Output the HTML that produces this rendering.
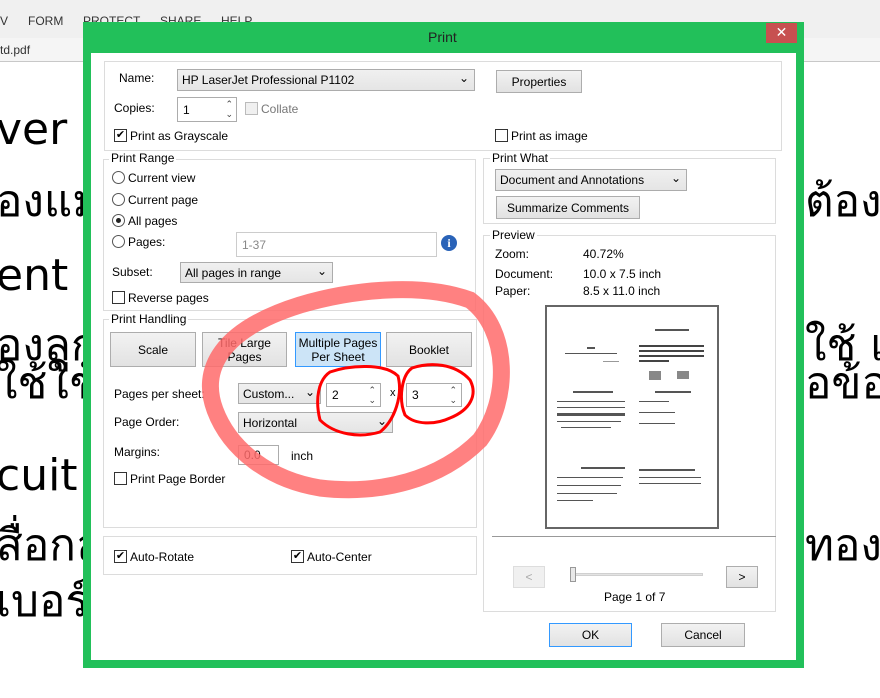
<!DOCTYPE html>
<html style="overflow:hidden"><head><meta charset="utf-8"><style>
*{margin:0;padding:0;box-sizing:border-box}
html,body{width:880px;height:698px;overflow:hidden}
body{background:#fff;font-family:"Liberation Sans","DejaVu Sans",sans-serif;font-size:12px;color:#000;position:relative}
.a{position:absolute;white-space:nowrap}
.big{position:absolute;font-size:44px;white-space:nowrap;font-family:"DejaVu Sans","Liberation Sans",sans-serif;color:#000}
.grp{position:absolute;border:1px solid #dcdcdc}
.gt{position:absolute;background:#fff;padding:0 2px;font-size:12px}
.btn{position:absolute;border:1px solid #adadad;background:linear-gradient(#f2f2f2,#e2e2e2);text-align:center;font-size:12px;display:flex;align-items:center;justify-content:center;line-height:14px}
.cb{position:absolute;width:13px;height:13px;border:1px solid #333;background:#fff;font-size:11px;line-height:11px;text-align:center}
.rd{position:absolute;width:13px;height:13px;border:1px solid #555;border-radius:50%;background:#fff}
.combo{position:absolute;border:1px solid #acacac;background:linear-gradient(#f0f0f0,#e5e5e5);padding-left:4px;font-size:12px;display:flex;align-items:center}
.combo:after{content:"⌄";position:absolute;right:5px;top:1px;font-size:12px}
.inp{position:absolute;border:1px solid #acacac;background:#fff;padding-left:5px;font-size:12px;display:flex;align-items:center}
.bar{position:absolute;height:2px;background:#555}
</style></head><body>
<div class="a" style="left:0;top:0;width:880px;height:38px;background:#f0f0f0"></div>
<div class="a" style="left:0;top:14px;font-size:12px;color:#333">V</div>
<div class="a" style="left:28px;top:14px;font-size:12px;color:#333">FORM</div>
<div class="a" style="left:83px;top:14px;font-size:12px;color:#333">PROTECT</div>
<div class="a" style="left:160px;top:14px;font-size:12px;color:#333">SHARE</div>
<div class="a" style="left:221px;top:14px;font-size:12px;color:#333">HELP</div>
<div class="a" style="left:0;top:38px;width:880px;height:24px;background:#f5f5f5;border-bottom:1px solid #c8c8c8"></div>
<div class="a" style="left:0;top:43px;font-size:12px;color:#333">td.pdf</div>
<div class="big" style="left:-4px;top:104px">ver</div>
<div class="big" style="left:-4px;top:166px">ื่องแม</div>
<div class="big" style="left:-4px;top:250px">ent</div>
<div class="big" style="left:-4px;top:310px">ื่องลูก</div>
<div class="big" style="left:-4px;top:348px">ใช้ใช้แ</div>
<div class="big" style="left:-4px;top:450px">cuit</div>
<div class="big" style="left:-4px;top:510px">สื่อกล</div>
<div class="big" style="left:-4px;top:566px">เบอร์อ</div>
<div class="big" style="left:805px;top:166px">ต้องก</div>
<div class="big" style="left:805px;top:310px">ใช้ เป</div>
<div class="big" style="left:805px;top:348px">อข้อมู</div>
<div class="big" style="left:805px;top:510px">ทองแด</div>

<div class="a" style="left:83px;top:22px;width:721px;height:646px;background:#22c05a"></div>
<div class="a" style="left:91px;top:53px;width:705px;height:607px;background:#fff"></div>
<div class="a" style="left:428px;top:29px;font-size:14px;color:#222">Print</div>
<div class="a" style="left:766px;top:23px;width:31px;height:20px;background:#c75050;color:#fff;text-align:center;font-size:14px;line-height:19px">✕</div>

<div class="grp" style="left:104px;top:61px;width:678px;height:90px"></div>
<div class="a" style="left:119px;top:71px">Name:</div>
<div class="combo" style="left:177px;top:69px;width:298px;height:22px">HP LaserJet Professional P1102</div>
<div class="btn" style="left:496px;top:70px;width:86px;height:23px">Properties</div>
<div class="a" style="left:114px;top:101px">Copies:</div>
<div class="inp" style="left:177px;top:97px;width:60px;height:25px">1<span style="position:absolute;right:3px;top:1px;font-size:9px;line-height:10px;color:#444">⌃<br>⌄</span></div>
<div class="cb" style="left:245px;top:102px;border-color:#bbb;background:#f0f0f0"></div>
<div class="a" style="left:261px;top:102px;color:#777">Collate</div>
<div class="cb" style="left:114px;top:129px">✔</div>
<div class="a" style="left:130px;top:129px">Print as Grayscale</div>
<div class="cb" style="left:495px;top:129px"></div>
<div class="a" style="left:511px;top:129px">Print as image</div>

<div class="grp" style="left:103px;top:159px;width:373px;height:152px"></div>
<div class="gt" style="left:109px;top:151px">Print Range</div>
<div class="rd" style="left:112px;top:171px"></div><div class="a" style="left:128px;top:171px">Current view</div>
<div class="rd" style="left:112px;top:193px"></div><div class="a" style="left:128px;top:193px">Current page</div>
<div class="rd" style="left:112px;top:214px"><div style="position:absolute;left:3px;top:3px;width:5px;height:5px;border-radius:50%;background:#222"></div></div><div class="a" style="left:128px;top:214px">All pages</div>
<div class="rd" style="left:112px;top:235px"></div><div class="a" style="left:128px;top:235px">Pages:</div>
<div class="inp" style="left:236px;top:232px;width:201px;height:25px;border-color:#ccc;color:#888">1-37</div>
<div class="a" style="left:441px;top:235px;width:16px;height:16px;border-radius:50%;background:#2a63b8;color:#fff;font-weight:bold;font-size:12px;text-align:center;line-height:16px;font-family:'Liberation Serif',serif">i</div>
<div class="a" style="left:112px;top:265px">Subset:</div>
<div class="combo" style="left:180px;top:262px;width:153px;height:21px">All pages in range</div>
<div class="cb" style="left:112px;top:291px"></div><div class="a" style="left:128px;top:291px">Reverse pages</div>

<div class="grp" style="left:103px;top:319px;width:374px;height:209px"></div>
<div class="gt" style="left:109px;top:312px">Print Handling</div>
<div class="btn" style="left:110px;top:332px;width:86px;height:35px">Scale</div>
<div class="btn" style="left:202px;top:332px;width:85px;height:35px">Tile Large<br>Pages</div>
<div class="btn" style="left:295px;top:332px;width:86px;height:35px;background:#cce4f7;border-color:#3399ff">Multiple Pages<br>Per Sheet</div>
<div class="btn" style="left:386px;top:332px;width:86px;height:35px">Booklet</div>
<div class="a" style="left:114px;top:387px">Pages per sheet:</div>
<div class="combo" style="left:238px;top:383px;width:83px;height:21px">Custom...</div>
<div class="inp" style="left:326px;top:383px;width:55px;height:24px">2<span style="position:absolute;right:4px;top:1px;font-size:9px;line-height:10px;color:#444">⌃<br>⌄</span></div>
<div class="a" style="left:390px;top:387px;font-size:11px">x</div>
<div class="inp" style="left:406px;top:383px;width:56px;height:24px">3<span style="position:absolute;right:4px;top:1px;font-size:9px;line-height:10px;color:#444">⌃<br>⌄</span></div>
<div class="a" style="left:114px;top:415px">Page Order:</div>
<div class="combo" style="left:238px;top:412px;width:155px;height:21px">Horizontal</div>
<div class="a" style="left:114px;top:445px">Margins:</div>
<div class="inp" style="left:238px;top:445px;width:41px;height:20px">0.0</div>
<div class="a" style="left:291px;top:449px">inch</div>
<div class="cb" style="left:114px;top:472px"></div><div class="a" style="left:130px;top:472px">Print Page Border</div>

<div class="grp" style="left:103px;top:536px;width:374px;height:39px"></div>
<div class="cb" style="left:114px;top:550px">✔</div><div class="a" style="left:130px;top:550px">Auto-Rotate</div>
<div class="cb" style="left:291px;top:550px">✔</div><div class="a" style="left:307px;top:550px">Auto-Center</div>

<div class="grp" style="left:483px;top:158px;width:293px;height:66px"></div>
<div class="gt" style="left:490px;top:151px">Print What</div>
<div class="combo" style="left:495px;top:169px;width:192px;height:22px">Document and Annotations</div>
<div class="btn" style="left:496px;top:196px;width:144px;height:23px">Summarize Comments</div>

<div class="grp" style="left:483px;top:235px;width:293px;height:377px"></div>
<div class="gt" style="left:490px;top:228px">Preview</div>
<div class="a" style="left:495px;top:247px">Zoom:</div><div class="a" style="left:583px;top:247px">40.72%</div>
<div class="a" style="left:495px;top:267px">Document:</div><div class="a" style="left:583px;top:267px">10.0 x 7.5 inch</div>
<div class="a" style="left:495px;top:284px">Paper:</div><div class="a" style="left:583px;top:284px">8.5 x 11.0 inch</div>
<div class="a" style="left:545px;top:305px;width:174px;height:224px;border:2px solid #666;background:#fff">
 <div class="bar" style="left:108px;top:22px;width:34px"></div>
 <div class="bar" style="left:40px;top:40px;width:8px"></div>
 <div class="bar" style="left:18px;top:46px;width:52px;height:1px"></div>
 <div class="bar" style="left:56px;top:54px;width:16px;height:1px;background:#999"></div>
 <div class="bar" style="left:92px;top:38px;width:65px;background:#444"></div>
 <div class="bar" style="left:92px;top:43px;width:65px;background:#444"></div>
 <div class="bar" style="left:92px;top:48px;width:65px;background:#444"></div>
 <div class="bar" style="left:92px;top:53px;width:30px;background:#444"></div>
 <div class="bar" style="left:102px;top:64px;width:12px;height:9px;background:#888"></div>
 <div class="bar" style="left:130px;top:64px;width:12px;height:8px;background:#888"></div>
 <div class="bar" style="left:26px;top:84px;width:40px"></div>
 <div class="bar" style="left:108px;top:84px;width:36px"></div>
 <div class="bar" style="left:10px;top:94px;width:68px;height:1px"></div>
 <div class="bar" style="left:10px;top:100px;width:68px;height:1px"></div>
 <div class="bar" style="left:10px;top:106px;width:68px;height:3px"></div>
 <div class="bar" style="left:10px;top:114px;width:64px;height:1px"></div>
 <div class="bar" style="left:14px;top:120px;width:50px;height:1px"></div>
 <div class="bar" style="left:92px;top:94px;width:30px;height:1px"></div>
 <div class="bar" style="left:92px;top:105px;width:36px;height:1px"></div>
 <div class="bar" style="left:92px;top:116px;width:36px;height:1px"></div>
 <div class="bar" style="left:34px;top:160px;width:44px"></div>
 <div class="bar" style="left:92px;top:162px;width:56px"></div>
 <div class="bar" style="left:10px;top:170px;width:66px;height:1px"></div>
 <div class="bar" style="left:10px;top:178px;width:64px;height:1px"></div>
 <div class="bar" style="left:10px;top:186px;width:60px;height:1px"></div>
 <div class="bar" style="left:10px;top:193px;width:36px;height:1px"></div>
 <div class="bar" style="left:92px;top:170px;width:62px;height:1px"></div>
 <div class="bar" style="left:92px;top:176px;width:62px;height:1px"></div>
</div>
<div class="a" style="left:492px;top:536px;width:284px;height:1px;background:#999"></div>
<div class="btn" style="left:513px;top:566px;width:32px;height:22px;color:#aaa;border-color:#ddd;background:#f0f0f0">&lt;</div>
<div class="a" style="left:572px;top:573px;width:131px;height:3px;background:#e3e3e3;border:1px solid #d0d0d0"></div>
<div class="a" style="left:570px;top:567px;width:6px;height:15px;background:#e8e8e8;border:1px solid #999"></div>
<div class="btn" style="left:726px;top:566px;width:32px;height:22px">&gt;</div>
<div class="a" style="left:604px;top:590px">Page 1 of 7</div>
<div class="btn" style="left:549px;top:623px;width:83px;height:24px;border-color:#3399ff">OK</div>
<div class="btn" style="left:661px;top:623px;width:84px;height:24px">Cancel</div>

<svg class="a" style="left:0;top:0" width="880" height="698">
<path d="M300,305 C350,290 420,282 470,300 C510,330 510,400 480,440 C440,480 380,495 320,488 C270,480 230,450 215,410 C200,370 220,330 300,305 Z" fill="none" stroke="#ff6b6b" stroke-opacity="0.85" stroke-width="17"/>
<path d="M330,372 C350,365 385,363 398,376 C403,395 395,420 380,432 C360,438 335,435 320,420 C315,400 318,380 330,372 Z" fill="none" stroke="#f00" stroke-width="3"/>
<path d="M412,368 C430,362 455,363 470,380 C478,395 470,410 450,418 C435,425 415,425 405,415 C398,398 402,375 412,368 Z" fill="none" stroke="#f00" stroke-width="3"/>
</svg>
</body></html>
